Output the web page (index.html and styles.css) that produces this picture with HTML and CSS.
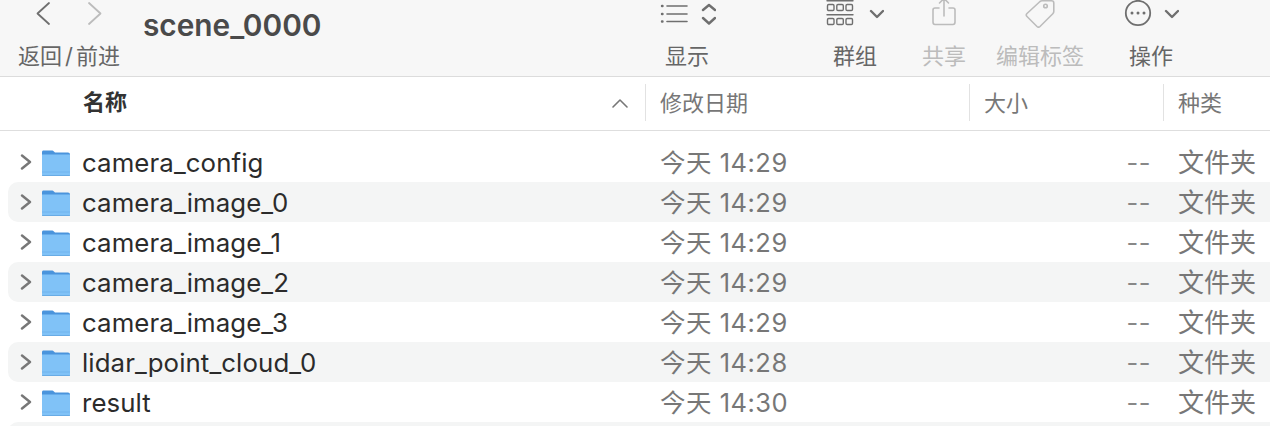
FILE: index.html
```html
<!DOCTYPE html>
<html lang="zh-CN">
<head>
    <meta charset="UTF-8">
    <title>scene_0000</title>
    <link rel="stylesheet" href="styles.css">
</head>
<body>
    <svg class="defs" width="0" height="0">
        <symbol id="folder" viewBox="0 0 28 26">
            <path d="M1.5 0.5H9.5C10.8 0.5 11.4 1 12.2 1.8L13 2.6H26C27.2 2.6 28 3.4 28 4.6V8H0V2C0 1.100 .6 .5 1.500 .5Z" fill="#4a94dc"/>
            <path d="M0 4.400H28V24.500C28 25.400 27.400 26 26.500 26H1.500C.6 26 0 25.400 0 24.500Z" fill="#80c2f7"/>
            <path d="M0 21.600H28V22.400H0Z" fill="#6db2ec"/>
            <path d="M0 25.200H28V26H0Z" fill="#62a6e0"/>
        </symbol>
        <symbol id="chevron" viewBox="0 0 12 16">
            <path d="M2 1.500L10 8L2 14.500" fill="none" stroke="#777" stroke-width="2.400" stroke-linecap="round" stroke-linejoin="round"/>
        </symbol>
    </svg>

    <header class="toolbar">
        <div class="tool nav-tool">
            <svg class="icon" width="66" height="28" viewBox="0 0 66 28" fill="none" stroke-width="1.800" stroke-linecap="round" stroke-linejoin="round">
                <path d="M13 3L1.500 13.500L13 24" stroke="#6f6f6f"/>
                <path d="M53 3L64.500 13.500L53 24" stroke="#bcbcbc"/>
            </svg>
            <span class="tool-label">返回<span class="slash">/</span>前进</span>
        </div>
        <h1 class="title">scene_0000</h1>
        <div class="tool show-tool">
            <svg class="icon" width="58" height="28" viewBox="0 0 58 28" fill="none" stroke="#6f6f6f" stroke-width="1.600" stroke-linecap="round" stroke-linejoin="round">
                <path d="M9 6H29M9 14H29M9 21.500H29"/>
                <path d="M4 6H4.500M4 14H4.500M4 21.500H4.500" stroke-width="2.400"/>
                <path d="M45 10L51 5L57 10M45 18L51 23.500L57 18" stroke-width="2.400"/>
            </svg>
            <span class="tool-label">显示</span>
        </div>
        <div class="tool group-tool">
            <svg class="icon" width="58" height="28" viewBox="0 0 58 28" fill="none" stroke="#6f6f6f" stroke-width="1.400" stroke-linecap="round" stroke-linejoin="round">
                <path d="M1 .8H27M1 14.700H27"/>
                <rect x="1.500" y="4.500" width="6.500" height="6" rx="1.200"/>
                <rect x="10.800" y="4.500" width="6.500" height="6" rx="1.200"/>
                <rect x="20" y="4.500" width="6.500" height="6" rx="1.200"/>
                <rect x="1.500" y="18.500" width="6.500" height="6" rx="1.200"/>
                <rect x="10.800" y="18.500" width="6.500" height="6" rx="1.200"/>
                <rect x="20" y="18.500" width="6.500" height="6" rx="1.200"/>
                <path d="M45 11L51 17L57 11" stroke-width="2.400"/>
            </svg>
            <span class="tool-label">群组</span>
        </div>
        <div class="tool share-tool off">
            <svg class="icon" width="24" height="28" viewBox="0 0 24 28" fill="none" stroke="#bcbcbc" stroke-width="1.600" stroke-linecap="round" stroke-linejoin="round">
                <path d="M7 8H3C1.800 8 1 8.800 1 10V22C1 23.400 1.800 24.500 3 24.500H21C22.200 24.500 23 23.400 23 22V10C23 8.800 22.200 8 21 8H17"/>
                <path d="M12 16V-1M7.500 3L12 -1.500L16.500 3"/>
            </svg>
            <span class="tool-label">共享</span>
        </div>
        <div class="tool tag-tool off">
            <svg class="icon" width="30" height="28" viewBox="0 0 30 28" fill="none" stroke="#bcbcbc" stroke-width="1.600" stroke-linejoin="round">
                <path d="M17 .8H26.500C28 .8 28.800 1.800 28.800 3V11.500C28.800 12.500 28.500 13 27.800 13.700L15 26.500C14 27.400 13 27.400 12 26.500L2 16.500C1 15.500 1 14.500 2 13.500L15 1.500C15.700 1 16.200 .8 17 .8Z"/>
                <circle cx="20.500" cy="6" r="1.800"/>
            </svg>
            <span class="tool-label">编辑标签</span>
        </div>
        <div class="tool action-tool">
            <svg class="icon" width="56" height="28" viewBox="0 0 56 28" fill="none" stroke="#6f6f6f" stroke-linecap="round" stroke-linejoin="round">
                <circle cx="15" cy="13" r="12.200" stroke-width="1.800"/>
                <circle cx="9" cy="13" r="1.500" fill="#6f6f6f" stroke="none"/>
                <circle cx="15" cy="13" r="1.500" fill="#6f6f6f" stroke="none"/>
                <circle cx="21" cy="13" r="1.500" fill="#6f6f6f" stroke="none"/>
                <path d="M43 11L49 17L55 11" stroke-width="2.400"/>
            </svg>
            <span class="tool-label">操作</span>
        </div>
    </header>

    <div class="list-head">
        <div class="head-cell head-name">
            <span>名称</span>
            <svg class="sort" width="18" height="10" viewBox="0 0 18 10" fill="none" stroke="#777" stroke-width="1.600" stroke-linecap="round" stroke-linejoin="round">
                <path d="M2 9L9 2L16 9"/>
            </svg>
        </div>
        <div class="head-cell">修改日期</div>
        <div class="head-cell">大小</div>
        <div class="head-cell">种类</div>
    </div>

    <main class="rows">
        <div class="row">
            <div class="cell-name"><svg class="arrow"><use href="#chevron"/></svg><svg class="folder"><use href="#folder"/></svg><span class="file-name">camera_config</span></div>
            <div class="cell-date">今天 14:29</div><div class="cell-size">--</div><div class="cell-kind">文件夹</div>
        </div>
        <div class="row">
            <div class="cell-name"><svg class="arrow"><use href="#chevron"/></svg><svg class="folder"><use href="#folder"/></svg><span class="file-name">camera_image_0</span></div>
            <div class="cell-date">今天 14:29</div><div class="cell-size">--</div><div class="cell-kind">文件夹</div>
        </div>
        <div class="row">
            <div class="cell-name"><svg class="arrow"><use href="#chevron"/></svg><svg class="folder"><use href="#folder"/></svg><span class="file-name">camera_image_1</span></div>
            <div class="cell-date">今天 14:29</div><div class="cell-size">--</div><div class="cell-kind">文件夹</div>
        </div>
        <div class="row">
            <div class="cell-name"><svg class="arrow"><use href="#chevron"/></svg><svg class="folder"><use href="#folder"/></svg><span class="file-name">camera_image_2</span></div>
            <div class="cell-date">今天 14:29</div><div class="cell-size">--</div><div class="cell-kind">文件夹</div>
        </div>
        <div class="row">
            <div class="cell-name"><svg class="arrow"><use href="#chevron"/></svg><svg class="folder"><use href="#folder"/></svg><span class="file-name">camera_image_3</span></div>
            <div class="cell-date">今天 14:29</div><div class="cell-size">--</div><div class="cell-kind">文件夹</div>
        </div>
        <div class="row">
            <div class="cell-name"><svg class="arrow"><use href="#chevron"/></svg><svg class="folder"><use href="#folder"/></svg><span class="file-name">lidar_point_cloud_0</span></div>
            <div class="cell-date">今天 14:28</div><div class="cell-size">--</div><div class="cell-kind">文件夹</div>
        </div>
        <div class="row">
            <div class="cell-name"><svg class="arrow"><use href="#chevron"/></svg><svg class="folder"><use href="#folder"/></svg><span class="file-name">result</span></div>
            <div class="cell-date">今天 14:30</div><div class="cell-size">--</div><div class="cell-kind">文件夹</div>
        </div>
        <div class="row"></div>
    </main>
</body>
</html>
```

FILE: styles.css
```css
html,
body {
    height: 426px;
    overflow: hidden;
}

body {
    margin: 0;
    background: #fff;
    font-family: Inter, "Noto Sans CJK SC", sans-serif;
}

.defs {
    display: block;
    height: 0;
}

/* toolbar */
.toolbar {
    display: flex;
    height: 76px;
    background: #f7f7f7;
    border-bottom: 1px solid #dcdcdc;
}

.tool {
    display: flex;
    flex-direction: column;
    align-items: center;
    flex: none;
}

.icon {
    display: block;
    height: 28px;
    overflow: hidden;
}

.tool-label {
    margin-top: 12px;
    font-size: 22px;
    line-height: 32px;
    color: #666;
    white-space: nowrap;
}

.off .tool-label {
    color: #bcbcbc;
}

.slash {
    margin: 0 3px;
}

.nav-tool {
    width: 102px;
    margin-left: 18px;
}

.title {
    flex: none;
    width: 485px;
    margin: 7px 0 0 23px;
    font-size: 29.8px;
    line-height: 36px;
    font-weight: 600;
    color: #4a4a4a;
}

.show-tool {
    width: 118px;
}

.group-tool {
    width: 130px;
    margin-left: 44px;
}

.share-tool {
    width: 48px;
}

.tag-tool {
    width: 100px;
    margin-left: 22px;
}

.action-tool {
    width: 102px;
    margin-left: 10px;
}

/* column header */
.list-head {
    display: grid;
    grid-template-columns: 645px 324px 194px 107px;
    height: 53px;
    border-bottom: 1px solid #dedede;
}

.head-cell {
    display: flex;
    align-items: center;
    justify-content: space-between;
    box-sizing: border-box;
    height: 37px;
    margin-top: 7px;
    padding: 0 0 4px 14px;
    border-left: 1px solid #e2e2e2;
    font-size: 22px;
    color: #777;
}

.head-name {
    padding: 0 16px 6px 83px;
    border-left: none;
    font-weight: 700;
    color: #333;
}

.sort {
    margin-top: 7px;
}

/* rows */
.rows {
    box-sizing: border-box;
    height: 295px;
    padding: 11px 0 0 8px;
    overflow: hidden;
}

.row {
    display: grid;
    grid-template-columns: 637px 324px 182px 119px;
    height: 40px;
    align-items: center;
    font-size: 25.5px;
    letter-spacing: .5px;
    color: #777;
    white-space: nowrap;
}

.row:nth-child(even) {
    background: #f4f5f5;
    border-radius: 10px 0 0 10px;
}

.cell-name {
    display: flex;
    align-items: center;
    height: 40px;
}

.file-name {
    font-size: 25.8px;
    line-height: 40px;
    letter-spacing: .1px;
    color: #2b2b2b;
}

.arrow {
    flex: none;
    width: 12px;
    height: 16px;
    margin: 0 0 2px 12px;
}

.folder {
    flex: none;
    width: 28px;
    height: 26px;
    margin: 0 12px 0 10px;
}

.cell-date {
    padding: 0 0 4px 15px;
}

.cell-size {
    text-align: right;
    color: #888;
}

.cell-kind {
    padding: 0 0 4px 27px;
    font-size: 26px;
    letter-spacing: 0;
}
```
